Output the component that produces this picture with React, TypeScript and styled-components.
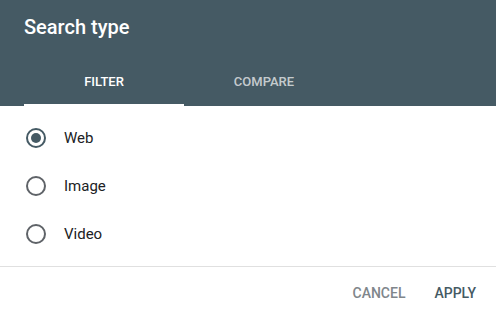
import React, { useState } from 'react'
import styled, { createGlobalStyle } from 'styled-components'

const GlobalStyle = createGlobalStyle`
  html, body {
    margin: 0;
    padding: 0;
    background: #ffffff;
  }
  body {
    font-family: Roboto, "Noto Sans", Arial, sans-serif;
    -webkit-font-smoothing: antialiased;
  }
`

const Dialog = styled.div`
  width: 496px;
  height: 319px;
  display: flex;
  flex-direction: column;
  background: #ffffff;
  overflow: hidden;
`

const Header = styled.div`
  background: #455a64;
  display: flex;
  flex-direction: column;
`

const Title = styled.h2`
  margin: 0;
  padding: 15px 24px 19px;
  font-size: 20px;
  line-height: 24px;
  font-weight: 500;
  color: #ffffff;
`

const Tabs = styled.div`
  display: flex;
  padding: 0 24px;
`

const Tab = styled.button<{ $active?: boolean }>`
  width: 160px;
  height: 48px;
  padding: 0 0 1px;
  border: none;
  background: transparent;
  font-family: inherit;
  font-size: 13px;
  font-weight: 500;
  text-transform: uppercase;
  color: ${(p) => (p.$active ? '#ffffff' : 'rgba(255, 255, 255, 0.7)')};
  box-shadow: ${(p) => (p.$active ? 'inset 0 -2px 0 #ffffff' : 'none')};
  cursor: pointer;
`

const Options = styled.div`
  padding: 8px 0;
  border-bottom: 1px solid #e0e0e0;
`

const OptionRow = styled.label`
  display: flex;
  align-items: center;
  height: 48px;
  padding-left: 26px;
  cursor: pointer;
`

const RadioCircle = styled.span<{ $checked?: boolean }>`
  box-sizing: border-box;
  width: 20px;
  height: 20px;
  border-radius: 50%;
  border: 2px solid ${(p) => (p.$checked ? '#455a64' : '#5f6368')};
  display: flex;
  align-items: center;
  justify-content: center;
  &::after {
    content: '';
    width: 10px;
    height: 10px;
    border-radius: 50%;
    background: ${(p) => (p.$checked ? '#455a64' : 'transparent')};
  }
`

const OptionLabel = styled.span`
  margin-left: 18px;
  font-size: 15px;
  color: #202124;
`

const Footer = styled.div`
  flex: 1;
  display: flex;
  align-items: center;
  justify-content: flex-end;
  gap: 13px;
  padding: 0 12px;
`

const FooterButton = styled.button<{ $primary?: boolean }>`
  border: none;
  background: transparent;
  padding: 8px;
  font-family: inherit;
  font-size: 14px;
  font-weight: 500;
  text-transform: uppercase;
  color: ${(p) => (p.$primary ? '#455a64' : '#80868b')};
  cursor: pointer;
`

const options = ['Web', 'Image', 'Video']

const App: React.FC = () => {
  const [tab, setTab] = useState<string>('filter')
  const [selected, setSelected] = useState<string>('Web')

  return (
    <>
      <GlobalStyle />
      <Dialog>
        <Header>
          <Title>Search type</Title>
          <Tabs>
            <Tab $active={tab === 'filter'} onClick={() => setTab('filter')}>
              Filter
            </Tab>
            <Tab $active={tab === 'compare'} onClick={() => setTab('compare')}>
              Compare
            </Tab>
          </Tabs>
        </Header>
        <Options>
          {options.map((o) => (
            <OptionRow key={o} onClick={() => setSelected(o)}>
              <RadioCircle $checked={selected === o} />
              <OptionLabel>{o}</OptionLabel>
            </OptionRow>
          ))}
        </Options>
        <Footer>
          <FooterButton>Cancel</FooterButton>
          <FooterButton $primary>Apply</FooterButton>
        </Footer>
      </Dialog>
    </>
  )
}

export default App
